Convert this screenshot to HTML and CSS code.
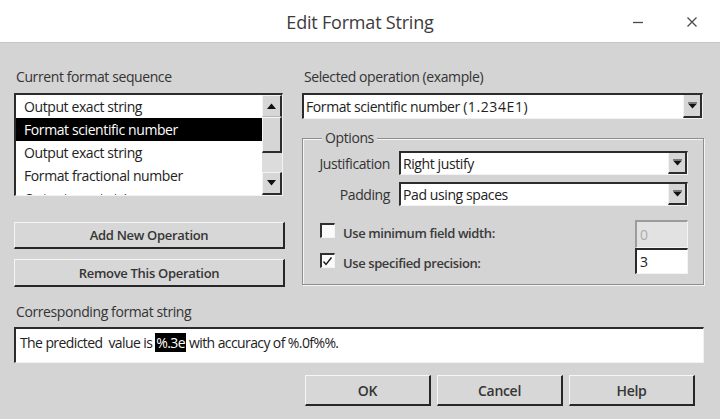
FILE: index.html
```html
<!DOCTYPE html>
<html lang="en">
<head>
<meta charset="utf-8">
<title>Edit Format String</title>
<link rel="stylesheet" href="styles.css">
</head>
<body>
<div class="window">
  <header class="titlebar">
    <div class="tb-spacer"></div>
    <div class="title">Edit Format String</div>
    <div class="wincontrols">
      <span class="wc"><svg width="12" height="12" viewBox="0 0 12 12"><path d="M1 6.5H11" stroke="#4a4a4a" stroke-width="1.3"/></svg></span>
      <span class="wc"><svg width="12" height="12" viewBox="0 0 12 12"><path d="M1.5 1.5L10.5 10.5M10.5 1.5L1.5 10.5" stroke="#4a4a4a" stroke-width="1.3"/></svg></span>
    </div>
  </header>

  <main class="content">
    <div class="columns">
      <section class="col-left">
        <div class="label">Current format sequence</div>
        <div class="listbox">
          <ul class="list">
            <li>Output exact string</li>
            <li class="sel">Format scientific number</li>
            <li>Output exact string</li>
            <li>Format fractional number</li>
            <li>Output exact string</li>
          </ul>
          <div class="scrollbar">
            <div class="sb-btn sb-up"><svg width="9" height="6" viewBox="0 0 9 6"><path d="M0 6L4.5 0.5L9 6Z" fill="#111"/></svg></div>
            <div class="sb-thumb"></div>
            <div class="sb-track"></div>
            <div class="sb-btn sb-down"><svg width="9" height="6" viewBox="0 0 9 6"><path d="M0 0L4.5 5.5L9 0Z" fill="#111"/></svg></div>
          </div>
        </div>
        <button class="btn btn-wide btn-add">Add New Operation</button>
        <button class="btn btn-wide btn-remove">Remove This Operation</button>
      </section>

      <section class="col-right">
        <div class="label">Selected operation (example)</div>
        <div class="combo combo-main">
          <span class="combo-text">Format scientific number&nbsp;<span class="example">(1.234E1)</span></span>
          <span class="combo-arrow"><svg width="9" height="7" viewBox="0 0 9 7"><path d="M0 1.5L4.5 6.5L9 1.5Z" fill="#111"/><path d="M0 0.5H9" stroke="#777" stroke-width="1"/></svg></span>
        </div>

        <fieldset class="options">
          <legend>Options</legend>
          <div class="opt-grid">
            <span class="opt-label">Justification</span>
            <div class="combo combo-small">
              <span class="combo-text">Right justify</span>
              <span class="combo-arrow"><svg width="9" height="7" viewBox="0 0 9 7"><path d="M0 1.5L4.5 6.5L9 1.5Z" fill="#111"/><path d="M0 0.5H9" stroke="#777" stroke-width="1"/></svg></span>
            </div>
            <span class="opt-label">Padding</span>
            <div class="combo combo-small">
              <span class="combo-text">Pad using spaces</span>
              <span class="combo-arrow"><svg width="9" height="7" viewBox="0 0 9 7"><path d="M0 1.5L4.5 6.5L9 1.5Z" fill="#111"/><path d="M0 0.5H9" stroke="#777" stroke-width="1"/></svg></span>
            </div>
          </div>

          <div class="check-row row-a">
            <div class="check">
              <span class="cb"></span>
              <span class="cb-label">Use minimum field width:</span>
            </div>
            <span class="num num-disabled">0</span>
          </div>
          <div class="check-row row-b">
            <div class="check">
              <span class="cb"><svg width="11" height="11" viewBox="0 0 11 11"><path d="M1.5 5.5L4 8.5L9.5 1.5" stroke="#1a1a1a" stroke-width="1.4" fill="none"/></svg></span>
              <span class="cb-label">Use specified precision:</span>
            </div>
            <span class="num">3</span>
          </div>
        </fieldset>
      </section>
    </div>

    <div class="label label-bottom">Corresponding format string</div>
    <div class="fmt-field">The predicted&nbsp; value is <span class="hl">%.3e</span> with accuracy of %.0f%%.</div>

    <div class="actions">
      <button class="btn btn-action">OK</button>
      <button class="btn btn-action">Cancel</button>
      <button class="btn btn-action">Help</button>
    </div>
  </main>
</div>
</body>
</html>
```

FILE: styles.css
```css
* { box-sizing: border-box; }

html, body {
  margin: 0;
  padding: 0;
}

body {
  width: 720px;
  height: 419px;
  overflow: hidden;
  background: #d4d4d4;
  font-family: "Open Sans", "Noto Sans", sans-serif;
  font-size: 14px;
  letter-spacing: -0.4px;
  color: #2a2a2a;
}

/* ---------- title bar ---------- */
.titlebar {
  height: 43px;
  background: #ffffff;
  border-bottom: 1px solid #c6c6c6;
  display: grid;
  grid-template-columns: 1fr auto 1fr;
  align-items: center;
}

.title {
  font-size: 18px;
  letter-spacing: -0.2px;
  color: #3b3b3b;
  padding-top: 2px;
}

.wincontrols {
  justify-self: end;
  display: flex;
  align-items: center;
  gap: 42px;
  padding-right: 22px;
  padding-top: 2px;
}

.wc { display: flex; }

/* ---------- main content ---------- */
.content {
  padding: 0 16px 0 14px;
}

.columns {
  display: grid;
  grid-template-columns: 271px 1fr;
  column-gap: 17px;
  align-items: start;
}

.label {
  line-height: 18px;
  padding-left: 2px;
  color: #333;
}

.col-left > .label,
.col-right > .label {
  margin-top: 25px;
}

/* list box */
.listbox {
  margin-top: 7px;
  width: 269px;
  height: 103px;
  background: #fff;
  border-top: 2px solid #2c2c2c;
  border-left: 2px solid #2c2c2c;
  border-right: 1px solid #f2f2f2;
  border-bottom: 1px solid #f2f2f2;
  display: flex;
}

.list {
  list-style: none;
  margin: 0;
  padding: 0;
  flex: 1;
  overflow: hidden;
}

.list li {
  height: 23px;
  line-height: 23px;
  padding-left: 8px;
  color: #222;
  white-space: nowrap;
}

.list li.sel {
  background: #000;
  color: #fff;
}

.scrollbar {
  width: 20px;
  display: flex;
  flex-direction: column;
  background: #d8d8d8;
}

.sb-btn {
  display: flex;
  align-items: center;
  justify-content: center;
  background: #d6d6d6;
  border-top: 1px solid #f4f4f4;
  border-left: 1px solid #f4f4f4;
  border-right: 2px solid #2c2c2c;
}

.sb-up {
  height: 22px;
  border-bottom: 1px solid #b8b8b8;
}

.sb-thumb {
  height: 36px;
  background: #d6d6d6;
  border-top: 1px solid #f4f4f4;
  border-left: 1px solid #f4f4f4;
  border-right: 2px solid #2c2c2c;
  border-bottom: 2px solid #2c2c2c;
}

.sb-track {
  flex: 1;
  background: #dcdcdc;
}

.sb-down {
  height: 23px;
  border-bottom: 2px solid #2c2c2c;
}

/* buttons */
.btn {
  font-family: inherit;
  letter-spacing: -0.3px;
  color: #353535;
  font-weight: 600;
  background: #d7d7d7;
  border-top: 1px solid #f6f6f6;
  border-left: 1px solid #f6f6f6;
  border-right: 2px solid #262626;
  border-bottom: 2px solid #262626;
  padding: 0;
  display: block;
}

.btn-wide {
  width: 271px;
  font-size: 13px;
}

.btn-add {
  margin-top: 26px;
  height: 27px;
}

.btn-remove {
  margin-top: 10px;
  height: 28px;
}

/* combo boxes */
.combo {
  background: #fff;
  border-top: 2px solid #2c2c2c;
  border-left: 2px solid #2c2c2c;
  border-right: 1px solid #f2f2f2;
  border-bottom: 1px solid #f2f2f2;
  display: flex;
  align-items: stretch;
}

.combo-text {
  flex: 1;
  display: flex;
  align-items: center;
  padding-left: 2px;
  color: #222;
  white-space: nowrap;
}

.example {
  letter-spacing: 0.6px;
}

.combo-arrow {
  width: 19px;
  display: flex;
  align-items: center;
  justify-content: center;
  background: #d6d6d6;
  border-left: 1px solid #f2f2f2;
  border-right: 2px solid #2c2c2c;
  border-bottom: 2px solid #2c2c2c;
}

.combo-main {
  margin-top: 7px;
  width: 401px;
  height: 26px;
}

.combo-small {
  height: 24px;
}

/* options group */
.options {
  margin: 10px 0 0 0;
  width: 402px;
  padding: 4px 15px 10px 8px;
  border: 1px solid #8e8e8e;
  box-shadow: inset 1px 1px 0 #f4f4f4, 1px 1px 0 #f4f4f4;
  min-width: 0;
}

.options legend {
  margin-left: 11px;
  padding: 0 3px;
  line-height: 18px;
  background: #d4d4d4;
  color: #333;
}

.opt-grid {
  display: grid;
  grid-template-columns: 79px 1fr;
  column-gap: 9px;
  row-gap: 7px;
  align-items: center;
}

.opt-label {
  text-align: right;
  color: #333;
  white-space: nowrap;
}

.check-row {
  display: flex;
  align-items: flex-start;
  justify-content: space-between;
}

.row-a {
  margin-top: 14px;
  height: 28px;
}

.row-b {
  height: 26px;
}

.check {
  display: flex;
  align-items: center;
  gap: 8px;
  height: 18px;
  margin-left: 9px;
}

.row-a .check { margin-top: 4px; }
.row-b .check { margin-top: 6px; }

.cb {
  width: 15px;
  height: 15px;
  margin-bottom: 5px;
  background: #fbfbfb;
  border-top: 2px solid #303030;
  border-left: 2px solid #303030;
  border-right: 1px solid #f4f4f4;
  border-bottom: 1px solid #f4f4f4;
  display: flex;
  align-items: flex-end;
  justify-content: flex-start;
}

.cb-label {
  font-size: 13px;
  font-weight: 600;
  color: #3a3a3a;
  line-height: 18px;
}

.num {
  width: 53px;
  height: 100%;
  display: flex;
  align-items: center;
  padding-left: 3px;
  background: #fff;
  border-top: 2px solid #2a2a2a;
  border-left: 2px solid #2a2a2a;
  border-right: 1px solid #f4f4f4;
  border-bottom: 1px solid #f4f4f4;
  color: #222;
}

.num-disabled {
  background: #e2e2e2;
  border-top-color: #9c9c9c;
  border-left-color: #9c9c9c;
  color: #ababab;
}

/* bottom */
.label-bottom {
  margin-top: 16px;
}

.fmt-field {
  margin-top: 6px;
  height: 36px;
  background: #fff;
  border-top: 2px solid #2c2c2c;
  border-left: 2px solid #2c2c2c;
  border-right: 1px solid #f2f2f2;
  border-bottom: 1px solid #f2f2f2;
  padding: 5px 0 0 4px;
  line-height: 18px;
  letter-spacing: -0.6px;
  color: #222;
  white-space: nowrap;
}

.hl {
  background: #000;
  color: #fff;
  padding: 0 1px;
}

.actions {
  margin-top: 12px;
  display: flex;
  justify-content: flex-end;
  gap: 6px;
  padding-right: 9px;
}

.btn-action {
  width: 126px;
  height: 31px;
  font-size: 14px;
}
```
